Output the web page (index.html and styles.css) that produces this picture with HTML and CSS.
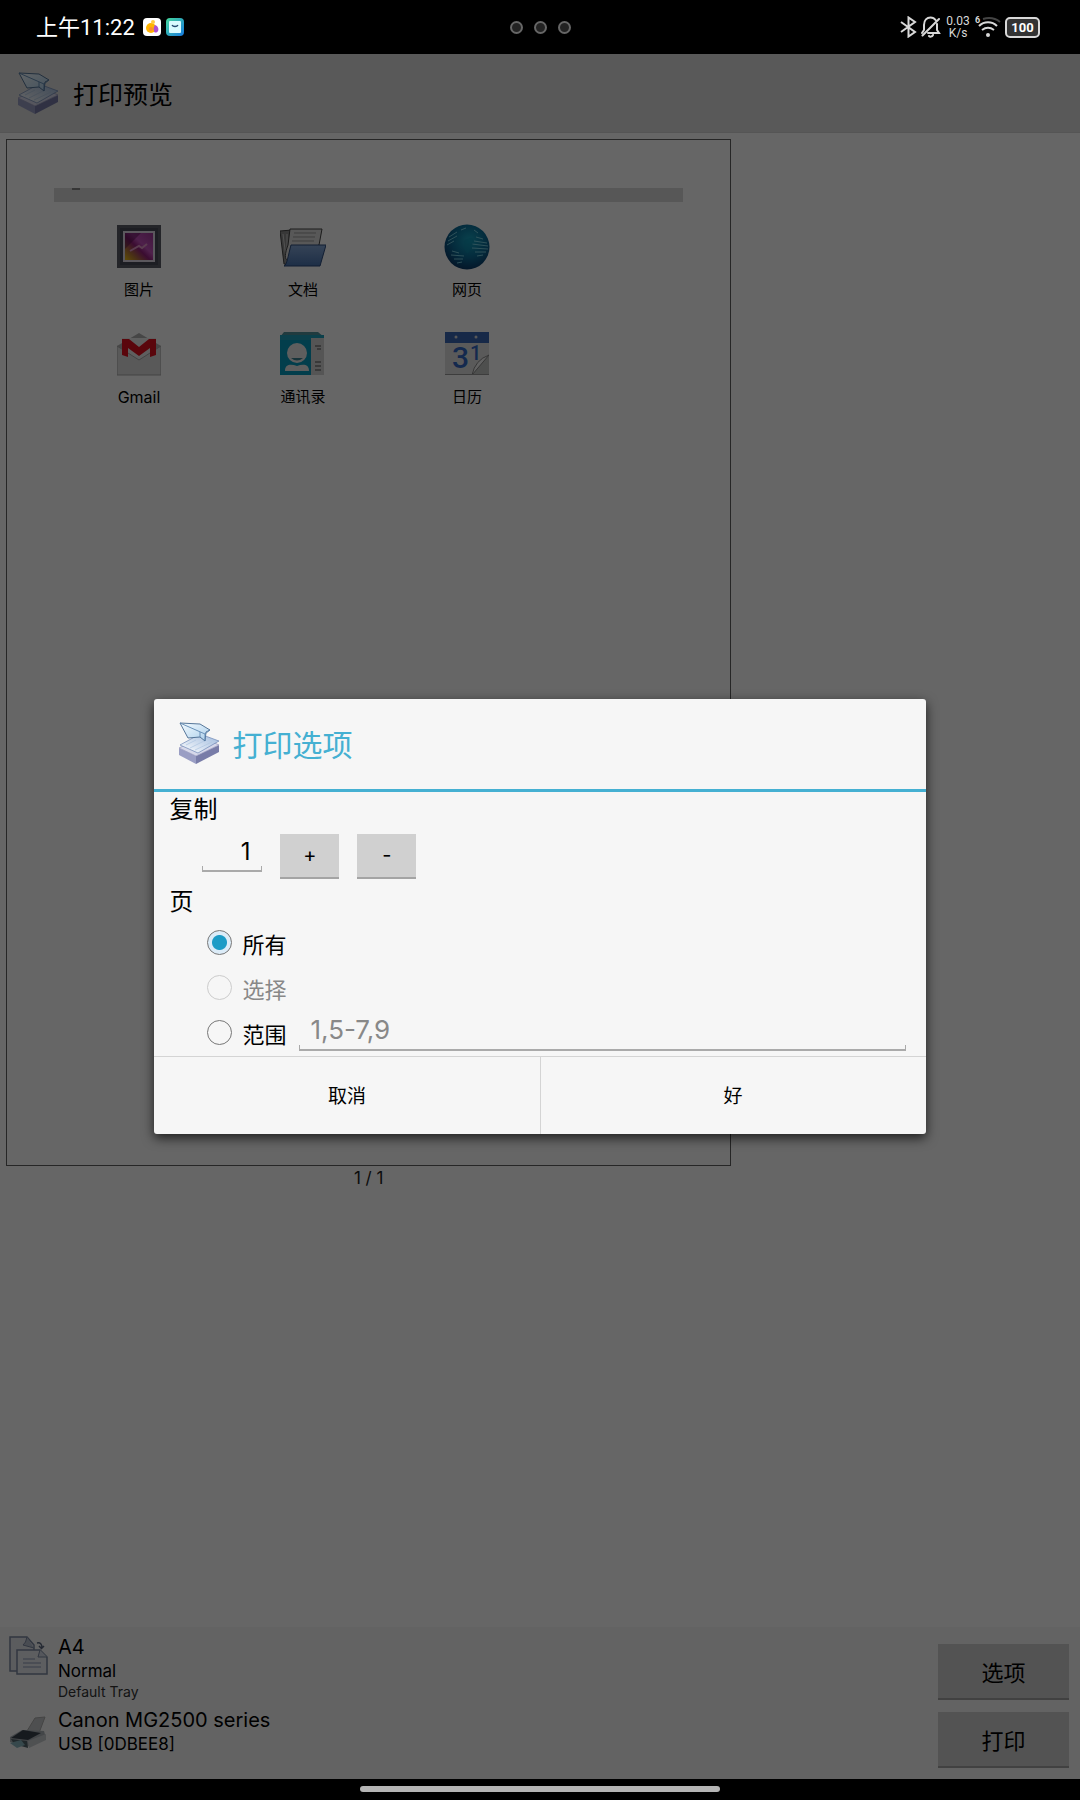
FILE: index.html
```html
<!DOCTYPE html>
<html lang="zh-CN">
<head>
<meta charset="utf-8">
<meta name="viewport" content="width=device-width, initial-scale=1">
<title>打印预览</title>
<link rel="stylesheet" href="styles.css">
</head>
<body>
<svg class="defs" aria-hidden="true">
  <defs>
    <linearGradient id="plane" x1="0" y1="0" x2="1" y2="1"><stop offset="0" stop-color="#f4fbff"/><stop offset="1" stop-color="#a9cdea"/></linearGradient>
    <linearGradient id="sheet" x1="0" y1="1" x2="1" y2="0"><stop offset="0" stop-color="#ffffff"/><stop offset="1" stop-color="#9cb8dc"/></linearGradient>
    <linearGradient id="photo" x1="0" y1="1" x2="1" y2="0"><stop offset="0" stop-color="#f0c010"/><stop offset=".22" stop-color="#b87838"/><stop offset=".45" stop-color="#94207c"/><stop offset=".6" stop-color="#c452bc"/><stop offset="1" stop-color="#a03898"/></linearGradient>
    <radialGradient id="globe" cx=".55" cy=".35" r=".65"><stop offset="0" stop-color="#18a4c0"/><stop offset=".6" stop-color="#0a6a96"/><stop offset="1" stop-color="#0a3a68"/></radialGradient>
    <linearGradient id="folder" x1="0" y1="0" x2="0" y2="1"><stop offset="0" stop-color="#86a8d8"/><stop offset="1" stop-color="#4a74b0"/></linearGradient>
    <linearGradient id="mint" x1="0" y1="0" x2="1" y2="1"><stop offset="0" stop-color="#46d89a"/><stop offset="1" stop-color="#1478e0"/></linearGradient>
    <symbol id="printershare" viewBox="0 0 42 42">
      <path d="M1 26 18 34V42L1 33Z" fill="#9a9ec4"/>
      <path d="M18 34 41 23V30L18 42Z" fill="#787ca8"/>
      <path d="M1 26 24 15 41 23 18 34Z" fill="#d6d8ea" stroke="#9094ba" stroke-width=".7"/>
      <path d="M2 23 22 12 41 19 20 31Z" fill="url(#sheet)" stroke="#6d87b4" stroke-width=".7"/>
      <path d="M8 23 18 18M12 26 28 18M17 28 34 20" stroke="#b3c8e2" stroke-width=".8" fill="none"/>
      <path d="M2 1 22 2 32 8 28 10 27 19 22 15 10 16Z" fill="url(#plane)" stroke="#46698f" stroke-width=".9" stroke-linejoin="round"/>
      <path d="M2 1 27 12 27 19M27 12 32 8M22 15 22 10" fill="none" stroke="#5d87b0" stroke-width=".9"/>
    </symbol>
  </defs>
</svg>

<header class="status">
  <div class="status-left">
    <span class="clock">上午11:22</span>
    <svg width="18" height="18" viewBox="0 0 18 18" aria-hidden="true"><rect width="18" height="18" rx="4" fill="#fff"/><circle cx="8" cy="10" r="5" fill="#ffb400"/><circle cx="10" cy="4" r="2" fill="#ffc940"/><path d="M12 7c3 1 4 4 3 6-1 2-4 2-4 0-1-2 0-5 1-6z" fill="#b050d0"/><circle cx="8" cy="11" r="2" fill="#ff8a30"/></svg>
    <svg width="18" height="18" viewBox="0 0 18 18" aria-hidden="true"><rect width="18" height="18" rx="4" fill="url(#mint)"/><rect x="3" y="3" width="12" height="12" rx="1" fill="#d8faff"/><path d="M6 7c1 2 5 2 6 0" fill="none" stroke="#244a70" stroke-width="1.3"/></svg>
  </div>
  <div class="dots"><i></i><i></i><i></i></div>
  <div class="status-right">
    <svg width="17" height="22" viewBox="0 0 17 22" fill="none" stroke="#d8d8d8" stroke-width="2" aria-hidden="true"><path d="M1 6 15 16 8.500 20.500V1.500L15 6 1 16"/></svg>
    <svg width="20" height="22" viewBox="0 0 20 22" fill="none" stroke="#d8d8d8" stroke-width="2" stroke-linecap="round" aria-hidden="true"><path d="M3 14V9C3 4 6 1.500 9.500 1.500c2 0 4 1 5 2.500M16 8v6l2 3H7M1.500 19.500 18 3M3 14l-2 3M8 20c1 1 3 1 4-1"/></svg>
    <span class="speed"><span>0.03</span><span>K/s</span></span>
    <svg width="26" height="24" viewBox="0 0 26 24" fill="none" stroke="#d8d8d8" stroke-width="2" aria-hidden="true"><path d="M8 4c7-2 12-1 17 3" stroke="#444"/><path d="M4 11c5-5 13-5 18 0M7 15c4-3 8-3 12 0"/><circle cx="13" cy="20" r="2" fill="#d8d8d8" stroke="none"/><text x="0" y="8" class="wifi-gen">6</text></svg>
    <span class="battery">100</span>
  </div>
</header>

<main class="app">
  <div class="titlebar">
    <svg class="app-icon" aria-hidden="true"><use href="#printershare"/></svg>
    <h1>打印预览</h1>
  </div>

  <section class="preview">
    <div class="sheet">
      <div class="strip"><i></i></div>
      <ul class="grid">
        <li>
          <svg width="44" height="44" viewBox="0 0 44 44" aria-hidden="true"><rect width="44" height="43" fill="#5a5c68"/><rect x="3" y="3" width="38" height="37" fill="#4a4c58"/><rect x="6" y="6" width="32" height="31" fill="#e4dce8"/><rect x="8" y="8" width="28" height="27" fill="url(#photo)"/><path d="M8 24 24 8h-16z" fill="#4c0c48" opacity=".45"/><path d="m13 26 9-5 3 2 5-4" stroke="#e49ac8" stroke-width="2" fill="none"/></svg>
          <span>图片</span>
        </li>
        <li>
          <svg width="46" height="44" viewBox="0 0 46 44" aria-hidden="true"><path d="M0 6 12 5 10 40 4 39Z" fill="#8c8c8c" stroke="#444"/><path d="M3 9 6 33M7 9 7 33" stroke="#ccc"/><path d="M10 4H42L39 20 8 35C4 35 5 28 8 20Z" fill="#dcdcdc" stroke="#444"/><path d="M14 8h22M13 12h22M12 16h22" stroke="#999"/><path d="M11 20H46L40 41H4C7 40 8 31 11 20Z" fill="url(#folder)" stroke="#2c4a7c"/></svg>
          <span>文档</span>
        </li>
        <li>
          <svg width="46" height="46" viewBox="0 0 46 46" aria-hidden="true"><circle cx="23" cy="23" r="22.500" fill="url(#globe)"/><path d="M5 13l8-5M4 17l9-5M3 21l7-4M28 20l16 2M28 24l16 1M30 17l13 2M31 28l11 0M32 13l7 2M33 32l6-1M8 27l7 2M7 31l13 1M10 35l9 0M13 39l5-1M17 6l5-2M30 6l4 3" stroke="#8fe0ee" stroke-width="1" opacity=".8" fill="none"/><path d="M20 17c8-6 12-2 8 6s-5 9-8 1z" fill="#0c8cac" opacity=".5"/></svg>
          <span>网页</span>
        </li>
        <li>
          <svg width="44" height="44" viewBox="0 0 44 44" aria-hidden="true"><path d="M0 14 22 1 44 14V43H0Z" fill="#b0b0b0"/><path d="M5 6h34v16L22 30 5 22z" fill="#eee"/><path d="M0 14 22 28 44 14V43H0Z" fill="#dedede" stroke="#aaa"/><path d="M5 7h7l10 8 10-8h7v16l-6 2v-9L22 24 11 16v9l-6-2z" fill="#e01020"/></svg>
          <span class="latin">Gmail</span>
        </li>
        <li>
          <svg width="46" height="44" viewBox="0 0 46 44" aria-hidden="true"><path d="M4 0H38L44 5H0Z" fill="#50949e"/><rect y="3" width="44" height="40" fill="#20a0bc"/><rect x="31" y="6" width="13" height="37" fill="#d4d4d4"/><path d="M35 14h6M37 17h4M35 30h6M35 34h6M35 38h6" stroke="#777" stroke-width="1.500"/><rect y="8" width="31" height="35" fill="#069bbd"/><circle cx="17" cy="21" r="10" fill="#ececec"/><path d="M11 26q6 5 12 0z" fill="#3c8292"/><path d="M5 39c0-7 6-7 12-5 6-2 12-2 12 5z" fill="#ececec"/></svg>
          <span>通讯录</span>
        </li>
        <li>
          <svg width="44" height="44" viewBox="0 0 44 44" aria-hidden="true"><rect width="44" height="43" fill="#e2e2e2"/><rect width="44" height="11" fill="#3b67b5"/><circle cx="11" cy="5" r="1.500" fill="#ddd"/><circle cx="31" cy="5" r="1.500" fill="#ddd"/><path d="M44 23 26 43H44Z" fill="#c4c6c4"/><path d="M44 23Q30 28 27 43Z" fill="#f4f4f4" stroke="#888"/><text x="7" y="36" class="cal-three">3</text><text x="25" y="28" class="cal-one">1</text><path d="M0 42.500H44" stroke="#999"/></svg>
          <span>日历</span>
        </li>
      </ul>
    </div>
    <p class="pager">1 / 1</p>
  </section>

  <footer class="bottom">
    <div class="info">
      <div class="info-row">
        <svg width="40" height="44" viewBox="0 -2 40 44" aria-hidden="true"><path d="M1 1H18L25 9V35H1Z" fill="#e4e6ec" stroke="#7c88a0" stroke-width="1.500"/><path d="M18 1Q17 7 14 9L25 12" fill="#b6bece" stroke="#7c88a0"/><path d="M8 14H31L38 21V38H8Z" fill="#e8eaf0" stroke="#7c88a0" stroke-width="1.500"/><path d="M31 14 29 21H38" fill="#d4dae6" stroke="#7c88a0"/><path d="M14 23h12M14 27h18M14 31h18" stroke="#8896b4"/><path d="M28 7q5-1 5 5l2-2m-2 3-3-3" stroke="#5c6880" stroke-width="1.500" fill="none"/></svg>
        <div class="lines"><strong>A4</strong><span>Normal</span><small>Default Tray</small></div>
      </div>
      <div class="info-row">
        <svg width="40" height="44" viewBox="0 -4 40 44" aria-hidden="true"><path d="M18 20 26 7 36 6 30 22Z" fill="#c4c6c8" stroke="#aaa"/><path d="M1 26 13 19 35 20 37 27 18 36 1 31Z" fill="#a8aeb4"/><path d="M2 27 14 19 32 22 19 29Z" fill="#39434d"/><path d="M2 28 18 30 19 37 5 33Z" fill="#52646c"/><path d="M19 30 37 23V29L20 37Z" fill="#c6cace"/><path d="M1 32 12 29 16 34 8 37Z" fill="#88b4be"/></svg>
        <div class="lines"><strong>Canon MG2500 series</strong><span>USB [0DBEE8]</span></div>
      </div>
    </div>
    <div class="actions">
      <button type="button" class="btn">选项</button>
      <button type="button" class="btn">打印</button>
    </div>
  </footer>

  <div class="scrim">
    <form class="dialog" role="dialog" aria-labelledby="dlg-title">
      <div class="dialog-head">
        <svg class="app-icon" aria-hidden="true"><use href="#printershare"/></svg>
        <h2 id="dlg-title">打印选项</h2>
      </div>
      <div class="dialog-body">
        <label class="section" for="copies">复制</label>
        <div class="copies">
          <input id="copies" class="field count" type="text" value="1">
          <button type="button" class="btn step">+</button>
          <button type="button" class="btn step">-</button>
        </div>
        <div class="section" id="pages">页</div>
        <div role="radiogroup" aria-labelledby="pages">
          <div class="option"><input type="radio" name="pages" id="all" checked><label for="all">所有</label></div>
          <div class="option"><input type="radio" name="pages" id="sel" disabled><label for="sel">选择</label></div>
          <div class="option"><input type="radio" name="pages" id="range"><label for="range">范围</label><input class="field range" type="text" placeholder="1,5-7,9" aria-label="范围"></div>
        </div>
      </div>
      <div class="dialog-foot">
        <button type="button">取消</button>
        <button type="button">好</button>
      </div>
    </form>
  </div>
</main>
<div class="navbar"><i></i></div>
</body>
</html>
```

FILE: styles.css
```css
* { box-sizing: border-box; }

body {
  margin: 0;
  min-height: 100vh;
  display: flex;
  flex-direction: column;
  background: #000;
  color: #000;
  font-family: Inter, "Noto Sans CJK SC", sans-serif;
}

h1, h2, p, ul { margin: 0; padding: 0; font-weight: 400; }
button, input { font: inherit; color: inherit; border: 0; margin: 0; padding: 0; background: none; }
.defs { position: absolute; width: 0; height: 0; }

/* status bar */
.status {
  height: 54px;
  padding: 0 40px 0 36px;
  display: grid;
  grid-template-columns: 1fr auto 1fr;
  align-items: center;
  color: #fff;
}
.status-left { display: flex; align-items: center; gap: 5px; }
.clock {
  font-family: Roboto, "Noto Sans CJK SC", sans-serif;
  font-size: 22px;
  line-height: 32px;
  padding-top: 2px;
  margin-right: 3px;
}
.dots { display: flex; gap: 11px; padding-left: 4px; }
.dots i { width: 13px; height: 13px; border: 2px solid #666; border-radius: 50%; background: #222; }
.status-right { display: flex; align-items: center; justify-content: flex-end; gap: 4px; }
.speed {
  width: 26px;
  display: flex;
  flex-direction: column;
  align-items: center;
  font: 12px/12px Roboto, sans-serif;
  color: #d8d8d8;
}
.wifi-gen { font: 700 9px Roboto, sans-serif; fill: #d8d8d8; stroke: none; }
.battery {
  width: 35px;
  height: 21px;
  border: 2px solid #d8d8d8;
  border-radius: 5px;
  background: #333;
  font: 700 13px/17px Roboto, sans-serif;
  text-align: center;
}

/* application */
.app {
  position: relative;
  flex: 1;
  display: flex;
  flex-direction: column;
  background: #fff;
}
.app-icon { width: 42px; height: 42px; flex: none; }
.titlebar {
  height: 79px;
  padding: 0 17px;
  display: flex;
  align-items: center;
  gap: 14px;
  background: #dedede;
  border-bottom: 1px solid #d4d4d4;
}
.titlebar h1 { font-size: 25px; }

.preview { flex: 1; width: 68%; padding: 6px 3px 0 6px; }
.sheet {
  aspect-ratio: 725 / 1026;
  padding: 48px 47px;
  border: 1px solid #606060;
}
.strip { height: 14px; background: #dadada; }
.strip i { display: block; width: 8px; height: 2px; margin-left: 18px; background: #888; }
.grid {
  list-style: none;
  width: 495px;
  padding: 22px 0 0 3px;
  display: grid;
  grid-template-columns: repeat(3, 1fr);
  font-size: 15px;
}
.grid li { height: 107px; display: flex; flex-direction: column; align-items: center; gap: 8px; }
.grid svg { height: 46px; }
.grid span { line-height: 24px; }
.grid .latin { font-size: 16px; }
.cal-three { font: 500 30px Roboto, sans-serif; fill: #3368c4; }
.cal-one { font: 500 20px Roboto, sans-serif; fill: #3368c4; }
.pager { font-size: 17px; line-height: 25px; text-align: center; color: #222; }

.bottom {
  min-height: 152px;
  padding: 7px 11px 11px 9px;
  display: flex;
  justify-content: space-between;
  background: #f7f7f7;
}
.info { display: flex; flex-direction: column; gap: 5px; }
.info-row { display: flex; gap: 9px; }
.lines { display: flex; flex-direction: column; font-size: 17px; line-height: 22px; }
.info strong { font-size: 20px; line-height: 26px; font-weight: 400; }
.info small { font-size: 14px; line-height: 20px; color: #333; }
.actions { display: flex; flex-direction: column; justify-content: flex-end; gap: 12px; }
.btn { background: #d0d0d0; border-bottom: 2px solid #a4a4a4; font-size: 22px; }
.actions .btn { width: 131px; height: 56px; }

/* dialog */
.scrim {
  position: absolute;
  inset: 0;
  display: flex;
  align-items: center;
  justify-content: center;
  background: rgba(0, 0, 0, .6);
}
.dialog {
  width: 71.4%;
  background: #f6f6f6;
  border-radius: 3px;
  box-shadow: 0 4px 12px rgba(0, 0, 0, .7);
}
.dialog-head {
  height: 93px;
  padding: 0 24px 2px;
  display: flex;
  align-items: center;
  gap: 12px;
  border-bottom: 3px solid #45b0d2;
}
.dialog h2 { font-size: 30px; color: #45b0d2; }
.dialog-body { padding: 0 20px 1px 15px; }
.section { display: block; font-size: 24px; line-height: 36px; }
.copies { height: 56px; padding-left: 33px; display: flex; align-items: center; gap: 18px; }
.field {
  height: 36px;
  background:
    linear-gradient(#aaa, #aaa) bottom / 100% 2px no-repeat,
    linear-gradient(#aaa, #aaa) bottom left / 1px 6px no-repeat,
    linear-gradient(#aaa, #aaa) bottom right / 1px 6px no-repeat;
  font-size: 24px;
  line-height: 28px;
}
.count { width: 60px; margin-bottom: 4px; padding: 0 12px 6px; text-align: right; }
.step { width: 59px; height: 45px; font-size: 20px; }
.option { height: 45px; padding-left: 38px; display: flex; align-items: center; font-size: 22px; }
.option label { margin: 0 13px 0 10px; }
.option input[type="radio"] {
  appearance: none;
  width: 25px;
  height: 25px;
  border: 1px solid #777;
  border-radius: 50%;
}
.option input:checked { background: radial-gradient(circle, #1b9bc6 0 7px, #dcecf8 8px); }
.option input:disabled { border-color: #ccc; }
.option input:disabled + label { color: #888; }
.range { flex: 1; min-width: 0; padding: 0 11px 6px; font-size: 26px; }
.range::placeholder { color: #888; opacity: 1; }
.dialog-foot { display: flex; border-top: 1px solid #d4d4d4; }
.dialog-foot button { flex: 1; height: 77px; padding-bottom: 2px; font-size: 19px; }
.dialog-foot button + button { border-left: 1px solid #d4d4d4; }

/* gesture bar */
.navbar { height: 21px; padding-bottom: 2px; display: flex; align-items: center; justify-content: center; }
.navbar i { width: 33.3%; height: 6px; border-radius: 3px; background: #b4b4b4; }
```
